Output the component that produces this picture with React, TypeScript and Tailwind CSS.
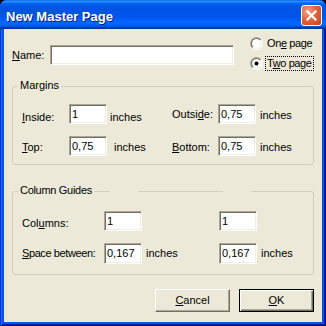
import React from "react";

const fieldBase =
  "flex items-center bg-white border border-t-[#ACA899] border-l-[#ACA899] border-r-white border-b-white shadow-[inset_1px_1px_0_#716F64,inset_-1px_-1px_0_#F1EFE2] pl-[2px] text-black";

function Radio({ checked, id, children, focused }: { checked?: boolean; id: string; children: React.ReactNode; focused?: boolean }) {
  return (
    <div className="flex items-center h-[19px] whitespace-nowrap">
      <svg width="13" height="13" viewBox="0 0 13 13" className="shrink-0">
        <defs>
          <linearGradient id={`${id}o`} x1="0" y1="0" x2="1" y2="1">
            <stop offset="0.5" stopColor="#ACA899" />
            <stop offset="0.5" stopColor="#FFFFFF" />
          </linearGradient>
          <linearGradient id={`${id}i`} x1="0" y1="0" x2="1" y2="1">
            <stop offset="0.5" stopColor="#716F64" />
            <stop offset="0.5" stopColor="#F1EFE2" />
          </linearGradient>
        </defs>
        <circle cx="6.5" cy="6.5" r="6.5" fill={`url(#${id}o)`} />
        <circle cx="6.5" cy="6.5" r="5.5" fill={`url(#${id}i)`} />
        <circle cx="6.5" cy="6.5" r="4.5" fill="#FFFFFF" />
        {checked && <circle cx="6.5" cy="6.5" r="2" fill="#000000" />}
      </svg>
      <span
        className={
          focused
            ? "ml-[2px] border border-dotted border-black px-[1px] leading-[13px] whitespace-nowrap tracking-[-0.4px]"
            : "ml-[2px] border border-transparent px-[1px] leading-[13px] whitespace-nowrap tracking-[-0.4px]"
        }
      >
        {children}
      </span>
    </div>
  );
}

export default function App() {
  return (
    <div className="w-[326px] h-[326px] bg-black font-['Liberation_Sans',Arial,sans-serif] text-[11px] leading-[13px] text-black">
      <div className="w-full h-full rounded-t-[7px] overflow-hidden flex flex-col bg-[#0055EA] shadow-[inset_1px_0_0_#0831D9,inset_-1px_-1px_0_#00138C,inset_2px_0_0_#166AEE,inset_-2px_-2px_0_#001EA0]">
        {/* Title bar */}
        <div className="h-[29px] shrink-0 flex items-center pt-[2px] pl-[6px] pr-[4px] bg-[linear-gradient(to_bottom,#0058EE_0%,#3593FF_4%,#288EFF_6%,#127DFF_8%,#036FFC_10%,#0262EE_14%,#0057E5_20%,#0054E3_24%,#0055EB_56%,#005BF5_66%,#026AFE_76%,#0062EF_86%,#0052D6_92%,#0040AB_94%,#003092_100%)]">
          <span className="pt-[2px] text-[13px] leading-[15px] font-bold text-white [text-shadow:1px_1px_0_#0A1883]">
            New Master Page
          </span>
          <div className="ml-auto w-[21px] h-[21px] rounded-[3px] border border-white bg-[radial-gradient(circle_at_30%_30%,#F2A58E_0%,#E2633F_45%,#C9411D_100%)] flex items-center justify-center">
            <svg width="19" height="19" viewBox="0 0 19 19">
              <path d="M5.5 5.5 L13.5 13.5 M13.5 5.5 L5.5 13.5" stroke="#FFFFFF" strokeWidth="2.2" strokeLinecap="square" />
            </svg>
          </div>
        </div>

        {/* Body */}
        <div className="flex-1 mx-[4px] mb-[4px] bg-[#ECE9D8] flex flex-col px-[8px] pt-[4px]">
          {/* Name row + radios */}
          <div className="flex items-start h-[40px] shrink-0">
            <div className="flex items-start mt-[12px] shrink-0">
              <div className="w-[38px] pt-[4px]">
                <span className="underline">N</span>ame:
              </div>
              <div className={`${fieldBase} w-[184px] h-[20px]`} />
            </div>
            <div className="flex flex-col gap-[1px] mt-[1px] ml-[16px] shrink-0">
              <Radio id="r1">
                On<span className="underline">e</span> page
              </Radio>
              <Radio id="r2" checked focused>
                T<span className="underline">w</span>o page
              </Radio>
            </div>
          </div>

          {/* Margins */}
          <div className="relative mt-[13px] border border-[#D0D0BF] rounded-[3px] pt-[17px] pb-[8px] pl-[9px] shrink-0">
            <span className="absolute left-[5px] -top-[8px] px-[2px] bg-[#ECE9D8]">Margins</span>
            <div className="flex items-start h-[20px]">
              <div className="w-[150px] flex items-start">
                <div className="w-[47px] pt-[7px]">
                  <span className="underline">I</span>nside:
                </div>
                <div className={`${fieldBase} w-[38px] h-[20px]`}>1</div>
                <div className="ml-[3px] pt-[7px]">inches</div>
              </div>
              <div className="flex items-start">
                <div className="w-[46px] pt-[4px]">
                  Outsi<span className="underline">d</span>e:
                </div>
                <div className={`${fieldBase} w-[38px] h-[20px]`}>0,75</div>
                <div className="ml-[4px] pt-[5px]">inches</div>
              </div>
            </div>
            <div className="flex items-start h-[20px] mt-[12px]">
              <div className="w-[150px] flex items-start">
                <div className="w-[47px] pt-[5px]">
                  <span className="underline">T</span>op:
                </div>
                <div className={`${fieldBase} w-[38px] h-[20px]`}>0,75</div>
                <div className="ml-[7px] pt-[5px]">inches</div>
              </div>
              <div className="flex items-start">
                <div className="w-[46px] pt-[5px]">
                  <span className="underline">B</span>ottom:
                </div>
                <div className={`${fieldBase} w-[38px] h-[20px]`}>0,75</div>
                <div className="ml-[4px] pt-[5px]">inches</div>
              </div>
            </div>
          </div>

          {/* Column Guides */}
          <div className="relative mt-[26px] border border-[#D0D0BF] rounded-[3px] pt-[19px] pb-[10px] pl-[9px] shrink-0">
            <span className="absolute left-[5px] -top-[8px] px-[2px] bg-[#ECE9D8] tracking-[-0.3px] whitespace-nowrap">Column Guides</span>
            <span className="absolute left-[97px] -top-[1px] w-[28px] h-[1px] bg-[#ECE9D8]" />
            <span className="absolute left-[210px] -top-[1px] w-[28px] h-[1px] bg-[#ECE9D8]" />
            <div className="flex items-start h-[20px]">
              <div className="w-[197px] flex items-start">
                <div className="w-[82px] pt-[6px]">
                  Col<span className="underline">u</span>mns:
                </div>
                <div className={`${fieldBase} w-[38px] h-[20px]`}>1</div>
              </div>
              <div className={`${fieldBase} w-[38px] h-[20px]`}>1</div>
            </div>
            <div className="flex items-start h-[21px] mt-[12px]">
              <div className="w-[197px] flex items-start">
                <div className="w-[82px] pt-[4px] tracking-[-0.4px] whitespace-nowrap">
                  <span className="underline">S</span>pace between:
                </div>
                <div className={`${fieldBase} w-[38px] h-[21px]`}>0,167</div>
                <div className="ml-[4px] pt-[4px]">inches</div>
              </div>
              <div className={`${fieldBase} w-[38px] h-[21px]`}>0,167</div>
              <div className="ml-[4px] pt-[4px]">inches</div>
            </div>
          </div>

          {/* Buttons */}
          <div className="flex justify-end gap-[9px] mt-[14px] shrink-0">
            <div className="w-[75px] h-[23px] flex items-center justify-center bg-[#ECE9D8] border border-t-white border-l-white border-r-[#716F64] border-b-[#716F64] shadow-[inset_-1px_-1px_0_#ACA899]">
              <span>
                <span className="underline">C</span>ancel
              </span>
            </div>
            <div className="w-[75px] h-[23px] flex items-center justify-center bg-[#ECE9D8] border border-black shadow-[inset_1px_1px_0_#FFFFFF,inset_-1px_-1px_0_#716F64,inset_-2px_-2px_0_#ACA899]">
              <span>
                <span className="underline">O</span>K
              </span>
            </div>
          </div>
        </div>
      </div>
    </div>
  );
}
